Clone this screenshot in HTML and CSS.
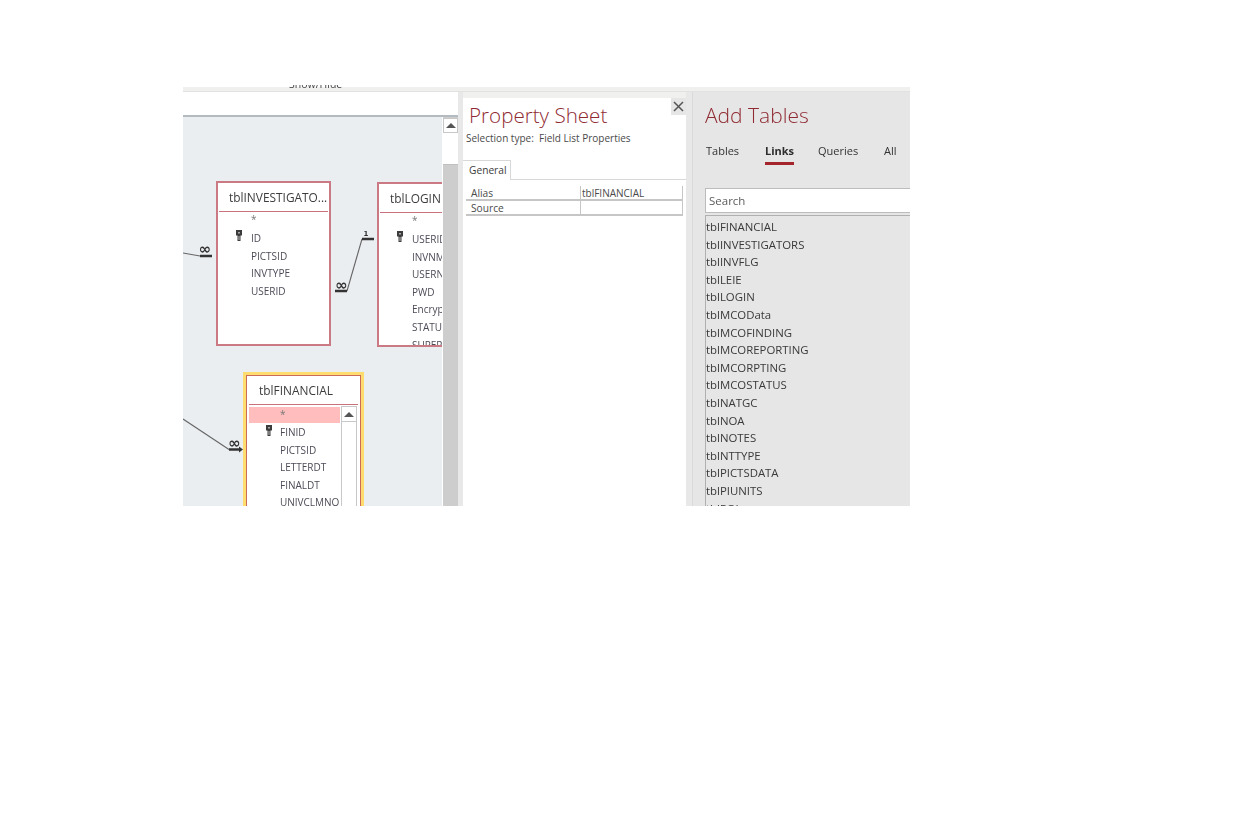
FILE: index.html
```html
<!DOCTYPE html>
<html lang="en">
<head>
<meta charset="utf-8">
<title>Relationships</title>
<link rel="stylesheet" href="styles.css">
</head>
<body>
<div class="shot">
  <div class="ribbon-clip"><span class="ribbon-label">Show/Hide</span></div>
  <div class="strip"></div>
  <div class="panes">
    <section class="design">
      <div class="tabbar"></div>
      <div class="canvas-wrap">
        <div class="canvas">
          <svg class="lines" width="259" height="390" viewBox="183 117 259 390">
            <path class="ln" d="M183 253 L200 256"/>
            <path class="bar" d="M200 256 H212"/>
            <text class="sym" x="205" y="254">∞</text>
            <path class="ln" d="M347 291 L362 239"/>
            <path class="bar" d="M335 291 H347"/>
            <path class="bar" d="M362 239 H374"/>
            <text class="sym" x="341.500" y="290">∞</text>
            <text class="one" x="366" y="236">1</text>
            <path class="ln" d="M183 419 L229 449.500"/>
            <path class="bar" d="M229 449.500 H240"/>
            <path class="arrow" d="M239 446.500 L243 449.500 L239 452.500 Z"/>
            <text class="sym" x="234.500" y="448">∞</text>
          </svg>

          <div class="tbl tbl-inv">
            <div class="tbl-title">tblINVESTIGATO...</div>
            <ul class="fields">
              <li class="star">*</li>
              <li class="pk"><svg class="key" width="6" height="11" viewBox="0 0 6 11"><path d="M0 0H6V5.500H4.500V11H1.500V5.500H0Z" fill="#3c3c3c"/><rect x="2" y="2" width="2" height="1.500" fill="#aaa"/><rect x="2.500" y="6" width="1" height="4" fill="#bbb"/></svg>ID</li>
              <li>PICTSID</li>
              <li>INVTYPE</li>
              <li>USERID</li>
            </ul>
          </div>

          <div class="tbl tbl-login">
            <div class="tbl-title">tblLOGIN</div>
            <ul class="fields">
              <li class="star">*</li>
              <li class="pk"><svg class="key" width="6" height="11" viewBox="0 0 6 11"><path d="M0 0H6V5.500H4.500V11H1.500V5.500H0Z" fill="#3c3c3c"/><rect x="2" y="2" width="2" height="1.500" fill="#aaa"/><rect x="2.500" y="6" width="1" height="4" fill="#bbb"/></svg>USERID</li>
              <li>INVNM</li>
              <li>USERNM</li>
              <li>PWD</li>
              <li>Encrypt</li>
              <li>STATUS</li>
              <li>SUPERV</li>
            </ul>
          </div>

          <div class="tbl-sel">
            <div class="tbl tbl-fin">
              <div class="tbl-title">tblFINANCIAL</div>
              <div class="fin-body">
                <ul class="fields">
                  <li class="star hit">*</li>
                  <li class="pk"><svg class="key" width="6" height="11" viewBox="0 0 6 11"><path d="M0 0H6V5.500H4.500V11H1.500V5.500H0Z" fill="#3c3c3c"/><rect x="2" y="2" width="2" height="1.500" fill="#aaa"/><rect x="2.500" y="6" width="1" height="4" fill="#bbb"/></svg>FINID</li>
                  <li>PICTSID</li>
                  <li>LETTERDT</li>
                  <li>FINALDT</li>
                  <li>UNIVCLMNO</li>
                </ul>
                <div class="mini-scroll"><div class="mini-up"><span class="tri"></span></div></div>
              </div>
            </div>
          </div>
        </div>
        <div class="vscroll">
          <div class="vs-up"><span class="tri"></span></div>
          <div class="vs-thumb"></div>
        </div>
      </div>
    </section>

    <div class="gutter"></div>

    <section class="props">
      <button class="close" aria-label="Close"><svg width="11" height="11" viewBox="0 0 11 11"><path d="M1 1L10 10M10 1L1 10" stroke="#555" stroke-width="1.500" fill="none"/></svg></button>
      <h2 class="pane-title prop-title">Property Sheet</h2>
      <p class="sel-type">Selection type:&nbsp; Field List Properties</p>
      <div class="prop-tabs"><span class="prop-tab">General</span></div>
      <div class="prop-grid">
        <div class="cell">Alias</div><div class="cell val">tblFINANCIAL</div>
        <div class="cell">Source</div><div class="cell val"></div>
      </div>
    </section>

    <div class="gutter gutter-r"></div>

    <section class="add">
      <h2 class="pane-title add-title">Add Tables</h2>
      <nav class="add-tabs">
        <span class="add-tab t1">Tables</span>
        <span class="add-tab t2 active">Links</span>
        <span class="add-tab t3">Queries</span>
        <span class="add-tab t4">All</span>
      </nav>
      <div class="search">Search</div>
      <ul class="tlist">
        <li>tblFINANCIAL</li>
        <li>tblINVESTIGATORS</li>
        <li>tblINVFLG</li>
        <li>tblLEIE</li>
        <li>tblLOGIN</li>
        <li>tblMCOData</li>
        <li>tblMCOFINDING</li>
        <li>tblMCOREPORTING</li>
        <li>tblMCORPTING</li>
        <li>tblMCOSTATUS</li>
        <li>tblNATGC</li>
        <li>tblNOA</li>
        <li>tblNOTES</li>
        <li>tblNTTYPE</li>
        <li>tblPICTSDATA</li>
        <li>tblPIUNITS</li>
        <li>tblPOL</li>
      </ul>
    </section>
  </div>
</div>
</body>
</html>
```

FILE: styles.css
```css
* { box-sizing: border-box; }
html, body { margin: 0; padding: 0; background: #fff; }
body { font-family: "Open Sans", "Noto Sans", sans-serif; color: #444; }
ul { list-style: none; margin: 0; padding: 0; }
h2, p { margin: 0; }

.shot {
  width: 727px;
  height: 426px;
  margin: 80px 0 0 183px;
  display: flex;
  flex-direction: column;
  overflow: hidden;
  filter: blur(0.3px);
}
.ribbon-clip {
  height: 4px; margin: 5px 0 -2px; overflow: hidden;
  position: relative; z-index: 1; flex: none;
}
.ribbon-label {
  position: absolute; left: 106px; top: -8px;
  font-size: 10.500px; line-height: 14px; color: #444;
}
.strip { height: 5px; background: #f0f0ee; border-bottom: 1px solid #e2e2e0; flex: none; }
.panes { flex: 1; display: flex; min-height: 0; }

/* design surface */
.design { width: 275px; display: flex; flex-direction: column; flex: none; }
.tabbar { height: 25px; background: #fff; border-bottom: 2px solid #b3bac0; flex: none; }
.canvas-wrap { flex: 1; display: flex; min-height: 0; }
.canvas {
  width: 259px; position: relative; overflow: hidden;
  background: #ebeef1; flex: none;
}
.lines { position: absolute; left: 0; top: 0; }
.ln { stroke: #666; stroke-width: 1.100; fill: none; }
.bar { stroke: #333; stroke-width: 2.500; fill: none; }
.arrow { fill: #333; }
.sym { font-family: "DejaVu Sans", sans-serif; font-size: 15px; font-weight: 700; text-anchor: middle; fill: #333; }
.one { font-family: "DejaVu Sans", sans-serif; font-size: 7px; font-weight: 700; text-anchor: middle; fill: #333; }

.tbl { background: #fff; border: 2px solid #cb7a83; overflow: hidden; }
.tbl-inv { position: absolute; left: 33px; top: 64px; width: 115px; height: 165px; }
.tbl-login { position: absolute; left: 194px; top: 65px; width: 115px; height: 165px; }
.tbl-sel {
  position: absolute; left: 60px; top: 255px; width: 121px; height: 170px;
  border: 3px solid #ffdc6e; background: #fff;
}
.tbl-fin { border: 1px solid #c96a5a; height: 100%; }
.tbl-title {
  margin: 0 1px; height: 29px; padding: 0 0 0 10px;
  font-size: 11.900px; line-height: 28px; color: #3c3c3c; white-space: nowrap;
  border-bottom: 1px solid #c8727c;
}
.tbl-fin .tbl-title { margin: 0 2px; height: 29px; }
.fields li {
  height: 17.600px; line-height: 17.600px; font-size: 10px; color: #4c4c58;
  padding-left: 33px; white-space: nowrap; position: relative;
}
.fields .star { height: 18px; line-height: 15px; color: #777; }
.key { position: absolute; left: 18px; top: 0; }

.fin-body { display: flex; position: relative; margin: 1px 2px 0 2px; }
.fin-body .fields { width: 91px; flex: none; }
.fin-body .fields li { padding-left: 31px; }
.fin-body .key { left: 17px; top: 1px; }
.fields .hit { background: #ffbdbd; height: 16px; margin: 1px 0; line-height: 15px; }
.mini-scroll { width: 16px; margin-left: 1px; border: 1px solid #c8c8c8; border-top: 0; background: #fff; flex: none; }
.mini-up { height: 16px; border: 1px solid #c8c8c8; display: flex; align-items: center; justify-content: center; margin: 0 -1px; }
.tri { width: 0; height: 0; border-left: 5px solid transparent; border-right: 5px solid transparent; border-bottom: 5px solid #555; }

.vscroll { width: 15px; margin-left: 1px; background: #cdcdcd; flex: none; padding-top: 1px; }
.vs-up { height: 15px; background: #fff; border: 1px solid #c8c8c8; display: flex; align-items: center; justify-content: center; }
.vs-thumb { height: 32px; background: #fff; border-bottom: 1px solid #c0c0c0; }

.gutter { width: 5px; background: #e8e8e8; flex: none; }
.gutter-r { width: 7px; border-right: 1px solid #dadada; }

/* property sheet */
.props { width: 223px; flex: none; background: linear-gradient(#f0f0ee 6px, #fff 6px); position: relative; padding-top: 6px; }
.close {
  position: absolute; right: 0; top: 6px; width: 15px; height: 17px;
  background: #e6e6e6; border: 0; padding: 0;
  display: flex; align-items: center; justify-content: center;
}
.pane-title { font-weight: 300; line-height: 28px; color: #8f2a32; }
.prop-title { font-size: 20.600px; padding: 3px 0 0 6px; }
.sel-type { margin: 2px 0 0 3px; font-size: 10px; line-height: 15px; color: #4a4a4a; white-space: nowrap; }
.prop-tabs { margin-top: 14px; height: 20px; border-bottom: 1px solid #d8d8d8; }
.prop-tab {
  display: block; width: 48px; height: 20px; padding-left: 6px;
  font-size: 10.200px; line-height: 19px; color: #3c3c3c;
  background: #fff; border: 1px solid #d8d8d8; border-bottom: 0; border-left: 0;
}
.prop-grid {
  margin: 6px 3px 0 3px; display: grid; grid-template-columns: 114px 103px;
  grid-auto-rows: 15px; font-size: 10.200px; color: #4a4a4a;
}
.cell { border-bottom: 2px solid #c6c6c6; padding-left: 5px; line-height: 14px; }
.val { border-left: 1px solid #c6c6c6; border-right: 1px solid #c6c6c6; padding-left: 1px; font-size: 10px; }

/* add tables */
.add { flex: 1; min-width: 0; background: #e6e6e6; padding: 9px 0 0 12px; }
.add-title { font-size: 21px; }
.add-tabs { display: flex; margin-top: 8px; height: 43px; position: relative; }
.add-tab { position: absolute; top: 5px; font-size: 11px; line-height: 17px; color: #333; }
.t1 { left: 1px; }
.t2 { left: 60px; }
.t3 { left: 113px; }
.t4 { left: 179px; }
.active { font-weight: 700; color: #2e2e2e; padding-bottom: 3px; border-bottom: 3px solid #a4262c; }
.search {
  margin-top: 8px; height: 25px; background: #fff; border: 1px solid #bcbcbc; border-right: 0;
  font-size: 11.500px; line-height: 24px; padding-left: 3px; color: #5c5c5c;
}
.tlist { margin-top: 2px; padding: 2px 0 0 0; border-left: 1px solid #b0b0b0; border-top: 1px solid #b0b0b0; }
.tlist li { height: 17.600px; line-height: 17.600px; font-size: 11.400px; color: #3a3a3a; white-space: nowrap; }
```
